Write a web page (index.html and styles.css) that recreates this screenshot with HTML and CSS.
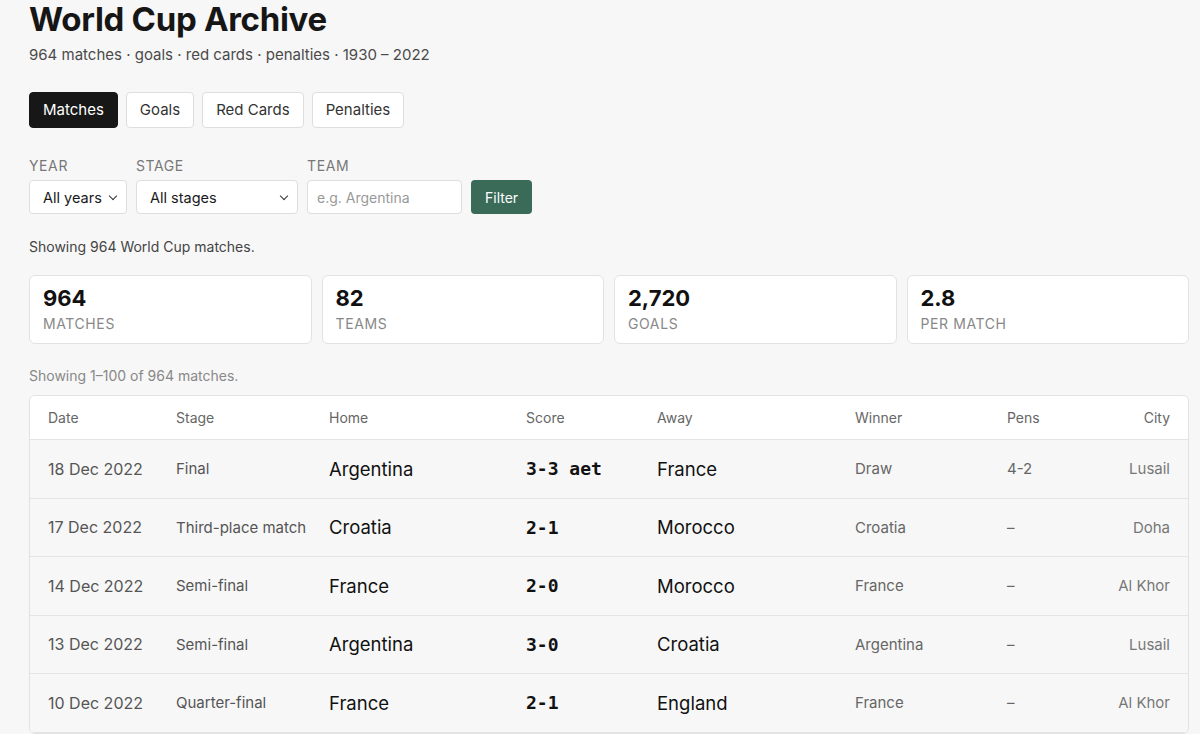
FILE: index.html
```html
<!DOCTYPE html>
<html lang="en">
<head>
    <meta charset="UTF-8">
    <meta name="viewport" content="width=device-width, initial-scale=1.0">
    <title>World Cup Archive</title>
    <link rel="stylesheet" href="styles.css">
</head>
<body>
    <div class="page">
        <div class="header">
            <h1>World Cup Archive</h1>
            <p>964 matches · goals · red cards · penalties · 1930 – 2022</p>
        </div>

        <div class="tabs">
            <a class="tab active" href="#">Matches</a>
            <a class="tab" href="#">Goals</a>
            <a class="tab" href="#">Red Cards</a>
            <a class="tab" href="#">Penalties</a>
        </div>

        <form class="filters">
            <label class="field">
                <span class="field-label">Year</span>
                <span class="select-wrap">
                    <select class="select select-year">
                        <option>All years</option>
                    </select>
                </span>
            </label>
            <label class="field">
                <span class="field-label">Stage</span>
                <span class="select-wrap">
                    <select class="select select-stage">
                        <option>All stages</option>
                    </select>
                </span>
            </label>
            <label class="field">
                <span class="field-label">Team</span>
                <input class="input" type="text" placeholder="e.g. Argentina">
            </label>
            <button class="btn-filter" type="button">Filter</button>
        </form>

        <p class="summary">Showing 964 World Cup matches.</p>

        <div class="stats">
            <div class="stat-card">
                <div class="stat-value">964</div>
                <div class="stat-label">Matches</div>
            </div>
            <div class="stat-card">
                <div class="stat-value">82</div>
                <div class="stat-label">Teams</div>
            </div>
            <div class="stat-card">
                <div class="stat-value">2,720</div>
                <div class="stat-label">Goals</div>
            </div>
            <div class="stat-card">
                <div class="stat-value">2.8</div>
                <div class="stat-label">Per match</div>
            </div>
        </div>

        <p class="range">Showing 1–100 of 964 matches.</p>

        <div class="table-wrap">
            <table class="matches">
                <colgroup>
                    <col style="width: 128px">
                    <col style="width: 153px">
                    <col style="width: 197px">
                    <col style="width: 131px">
                    <col style="width: 198px">
                    <col style="width: 152px">
                    <col style="width: 100px">
                    <col>
                </colgroup>
                <thead>
                    <tr>
                        <th>Date</th>
                        <th>Stage</th>
                        <th>Home</th>
                        <th>Score</th>
                        <th>Away</th>
                        <th>Winner</th>
                        <th>Pens</th>
                        <th class="right">City</th>
                    </tr>
                </thead>
                <tbody id="matchRows"></tbody>
            </table>
        </div>
    </div>

    <script>
        // Latest matches, newest first
        const matches = [
            ['18 Dec 2022', 'Final', 'Argentina', '3-3 aet', 'France', 'Draw', '4-2', 'Lusail'],
            ['17 Dec 2022', 'Third-place match', 'Croatia', '2-1', 'Morocco', 'Croatia', '–', 'Doha'],
            ['14 Dec 2022', 'Semi-final', 'France', '2-0', 'Morocco', 'France', '–', 'Al Khor'],
            ['13 Dec 2022', 'Semi-final', 'Argentina', '3-0', 'Croatia', 'Argentina', '–', 'Lusail'],
            ['10 Dec 2022', 'Quarter-final', 'France', '2-1', 'England', 'France', '–', 'Al Khor']
        ];

        let rowsHtml = '';
        matches.forEach(function(m) {
            rowsHtml += '<tr>';
            rowsHtml += `<td class="date">${m[0]}</td>`;
            rowsHtml += `<td class="stage">${m[1]}</td>`;
            rowsHtml += `<td class="team">${m[2]}</td>`;
            rowsHtml += `<td class="score">${m[3]}</td>`;
            rowsHtml += `<td class="team">${m[4]}</td>`;
            rowsHtml += `<td class="winner">${m[5]}</td>`;
            rowsHtml += `<td class="pens">${m[6]}</td>`;
            rowsHtml += `<td class="city right">${m[7]}</td>`;
            rowsHtml += '</tr>';
        });
        document.getElementById('matchRows').innerHTML = rowsHtml;
    </script>
</body>
</html>
```

FILE: styles.css
```css
body {
    font-family: Inter, "Noto Sans", Arial, sans-serif;
    margin: 0;
    background-color: #f7f7f7;
    color: #1a1a1a;
}
.page {
    padding: 0 11px 40px 29px;
}
.header h1 {
    margin: 0;
    font-size: 33px;
    line-height: 38px;
    font-weight: 700;
    letter-spacing: -0.3px;
    color: #161616;
}
.header p {
    margin: 7px 0 0;
    font-size: 15px;
    color: #4a4a4a;
}
.tabs {
    display: flex;
    gap: 8px;
    margin-top: 28px;
}
.tab {
    display: block;
    padding: 0 13px;
    height: 36px;
    line-height: 34px;
    box-sizing: border-box;
    border: 1px solid #dedede;
    border-radius: 4px;
    background: white;
    color: #333;
    font-size: 15px;
    text-decoration: none;
}
.tab.active {
    background: #171717;
    border-color: #171717;
    color: white;
}
.filters {
    display: flex;
    align-items: flex-end;
    gap: 9px;
    margin-top: 29px;
}
.field {
    display: flex;
    flex-direction: column;
}
.field-label {
    font-size: 14px;
    text-transform: uppercase;
    letter-spacing: 0.6px;
    color: #777;
    margin-bottom: 6px;
}
.select-wrap {
    position: relative;
    display: block;
}
/* small chevron drawn over the native select */
.select-wrap::after {
    content: "";
    position: absolute;
    right: 11px;
    top: 13px;
    width: 5px;
    height: 5px;
    border-right: 1.3px solid #333;
    border-bottom: 1.3px solid #333;
    transform: rotate(45deg);
    pointer-events: none;
}
.select,
.input {
    height: 34px;
    box-sizing: border-box;
    border: 1px solid #dedede;
    border-radius: 4px;
    background: white;
    font-family: inherit;
    font-size: 14.5px;
    color: #1a1a1a;
}
.select {
    appearance: none;
    -webkit-appearance: none;
    padding: 0 8px 0 13px;
}
.select-year { width: 98px; }
.select-stage { width: 162px; }
.input {
    width: 155px;
    padding: 0 9px;
    font-size: 14px;
}
.input::placeholder {
    color: #999;
}
.btn-filter {
    height: 34px;
    padding: 0 14px;
    border: none;
    border-radius: 4px;
    background: #3a6b58;
    color: white;
    font-family: inherit;
    font-size: 14px;
}
.summary {
    margin: 24px 0 0;
    font-size: 14px;
    color: #444;
}
.stats {
    display: grid;
    grid-template-columns: repeat(4, 1fr);
    gap: 10px;
    margin-top: 20px;
}
.stat-card {
    background: white;
    border: 1px solid #e2e2e2;
    border-radius: 6px;
    padding: 9px 13px 12px;
    height: 69px;
    box-sizing: border-box;
}
.stat-value {
    font-size: 22px;
    font-weight: 700;
    line-height: 26px;
    color: #111;
}
.stat-label {
    font-size: 14px;
    text-transform: uppercase;
    letter-spacing: 0.6px;
    color: #888;
    margin-top: 4px;
}
.range {
    margin: 23px 0 0;
    font-size: 14px;
    color: #888;
}
.table-wrap {
    margin-top: 11px;
    border: 1px solid #e2e2e2;
    border-radius: 6px;
    overflow: hidden;
}
.matches {
    width: 100%;
    border-collapse: collapse;
    table-layout: fixed;
}
.matches th {
    background: white;
    height: 43px;
    padding: 0 18px;
    text-align: left;
    font-size: 14px;
    font-weight: 400;
    color: #666;
    border-bottom: 1px solid #e4e4e4;
}
.matches td {
    height: 57.5px;
    padding: 0 18px;
    background: #f7f7f7;
    border-bottom: 1px solid #e4e4e4;
    font-size: 15px;
    white-space: nowrap;
}
.matches .right {
    text-align: right;
}
.matches .date {
    font-size: 16px;
    color: #555;
}
.stage {
    color: #555;
}
.matches .team {
    font-size: 18.5px;
    color: #111;
}
.matches .score {
    font-family: "DejaVu Sans Mono", "Liberation Mono", monospace;
    font-weight: 700;
    font-size: 18px;
    color: #111;
}
.winner,
.pens {
    color: #666;
}
.city {
    color: #777;
}
```
